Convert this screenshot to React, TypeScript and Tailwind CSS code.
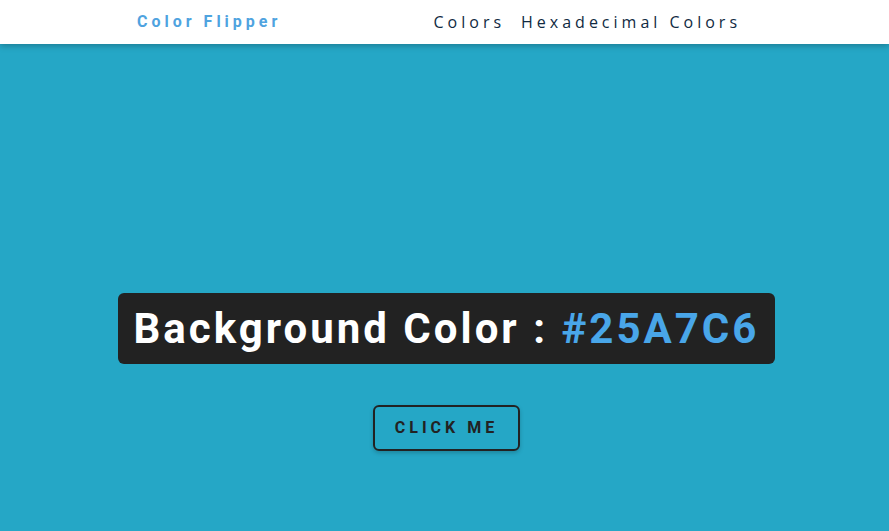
export default function App() {
  return (
    <div className="min-h-[531px] bg-[#25a7c6] flex flex-col" style={{ fontFamily: 'Roboto, "Open Sans", sans-serif' }}>
      <nav className="h-[44px] bg-white shadow-[0_2px_6px_rgba(0,0,0,0.25)] flex items-center">
        <div className="ml-[137px] w-[604px] flex items-center justify-between">
          <h4 className="text-[16px] font-bold tracking-[4px] text-[#4fa3df] font-['Roboto']">Color Flipper</h4>
          <ul className="flex gap-[16px] text-[16px] font-medium tracking-[4px] text-[#102a42] font-['Open_Sans']">
            <li>Colors</li>
            <li>Hexadecimal Colors</li>
          </ul>
        </div>
      </nav>
      <main className="flex flex-col items-center pt-[249px] pl-[4px]">
        <h2 className="bg-[#222222] text-white rounded-[6px] px-[16px] h-[71px] flex items-center text-[42px] font-bold tracking-[3px] font-['Roboto']">
          Background Color :&nbsp;<span className="text-[#49a6e9]">#25A7C6</span>
        </h2>
        <button className="mt-[41px] w-[147px] h-[46px] border-2 border-[#222222] rounded-[6px] text-[16px] font-bold tracking-[4px] text-[#222222] shadow-[0_2px_4px_rgba(0,0,0,0.2)] font-['Roboto']">
          CLICK ME
        </button>
      </main>
    </div>
  )
}
